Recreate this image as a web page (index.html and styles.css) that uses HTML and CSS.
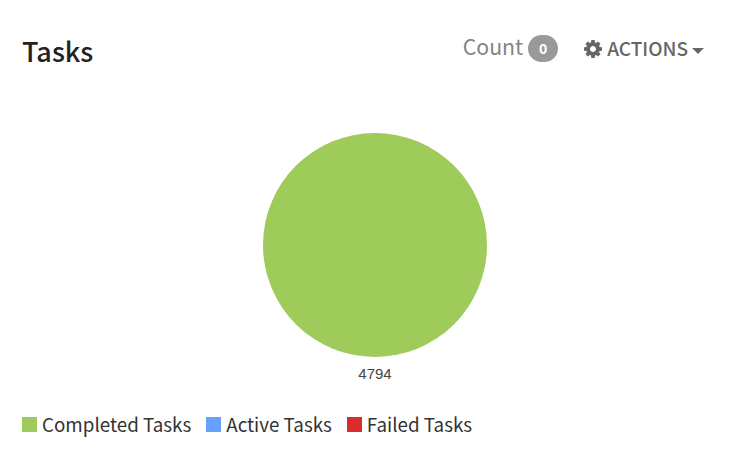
FILE: index.html
```html
<!DOCTYPE html>
<html lang="en">
<head>
<meta charset="utf-8">
<title>Tasks</title>
<link rel="stylesheet" href="styles.css">
</head>
<body>
<main class="panel">
  <header class="head">
    <h1 class="title">Tasks</h1>
    <div class="tools">
      <span class="count">Count <span class="badge">0</span></span>
      <button class="actions" type="button">
        <svg class="gear" viewBox="0 0 1536 1536" aria-hidden="true"><path d="M1024 768q0-106-75-181t-181-75-181 75-75 181 75 181 181 75 181-75 75-181zm512-109v222q0 12-8 23t-20 13l-185 28q-19 54-39 91 35 50 107 138 10 12 10 25t-9 23q-27 37-99 108t-94 71q-12 0-26-9l-138-108q-44 23-91 38-16 136-29 186-7 28-36 28H657q-14 0-24.500-8.500T621 1506l-28-184q-49-16-90-37l-141 107q-10 9-25 9-14 0-25-11-126-114-165-168-7-10-7-23 0-12 8-23 15-21 51-66.500t54-70.500q-27-50-41-99L29 913q-13-2-21-12.500T0 877V655q0-12 8-23t19-13l186-28q14-46 39-92-40-57-107-138-10-12-10-24 0-10 9-23 26-36 98.500-107.500T337 135q13 0 26 10l138 107q44-23 91-38 16-136 29-186 7-28 36-28h222q14 0 24.500 8.500T915 30l28 184q49 16 90 37l142-107q9-9 24-9 13 0 25 10 129 119 165 170 7 8 7 22 0 12-8 23-15 21-51 66.500t-54 70.500q26 50 41 98l183 28q13 2 21 12.500t8 23.500z"/></svg>
        <span>ACTIONS</span>
        <span class="caret"></span>
      </button>
    </div>
  </header>
  <figure class="chart">
    <svg class="pie" viewBox="0 0 224 224" aria-hidden="true"><circle cx="112" cy="112" r="112"/></svg>
    <figcaption class="value">4794</figcaption>
  </figure>
  <ul class="legend">
    <li class="legend-item"><span class="swatch swatch-done"></span>Completed Tasks</li>
    <li class="legend-item"><span class="swatch swatch-active"></span>Active Tasks</li>
    <li class="legend-item"><span class="swatch swatch-failed"></span>Failed Tasks</li>
  </ul>
</main>
</body>
</html>
```

FILE: styles.css
```css
* { box-sizing: border-box; }
html, body { margin: 0; background: #fff; }
body { width: 747px; height: 461px; overflow: hidden; font-family: "Noto Sans CJK JP", "Noto Sans", sans-serif; }
.panel { padding: 30px 43px 0 22px; display: flex; flex-direction: column; }
.head { display: flex; justify-content: space-between; align-items: flex-start; height: 103px; }
.title { margin: 0; font-size: 27px; line-height: 42px; font-weight: 500; color: #222; }
.tools { display: flex; align-items: center; height: 36px; }
.count { display: flex; align-items: center; align-self: flex-start; gap: 5px; font-size: 21.300px; color: #848484; line-height: 32px; }
.badge { display: inline-flex; justify-content: center; align-items: center; width: 30px; height: 27px; margin-top: 4px; border-radius: 14px; background: #999; color: #fff; font-size: 14px; font-weight: 700; }
.actions { display: flex; align-items: center; margin: -2px 0 0 26px; padding: 0; border: 0; background: none; font: inherit; font-size: 19px; font-weight: 500; color: #666; }
.gear { width: 18px; height: 18px; margin: 4px 5px 0 0; fill: #666; }
.caret { width: 0; height: 0; margin: 7px 0 0 4px; border: 6px solid transparent; border-top-color: #666; border-bottom: 0; }
.chart { margin: 0; display: flex; flex-direction: column; align-items: center; width: 706px; }
.pie { width: 224px; height: 224px; display: block; fill: #9ecb5a; }
.value { margin-top: 8px; font: 15px/18px "Liberation Sans", Arial, sans-serif; color: #444; }
.legend { list-style: none; margin: 27px 0 0; padding: 0; display: flex; gap: 15px; }
.legend-item { display: flex; align-items: center; gap: 5px; font-size: 18.800px; line-height: 28px; color: #333; }
.swatch { width: 15px; height: 15px; }
.swatch-done { background: #9ecb5a; }
.swatch-active { background: #68a0ff; }
.swatch-failed { background: #d92c2c; }
```
